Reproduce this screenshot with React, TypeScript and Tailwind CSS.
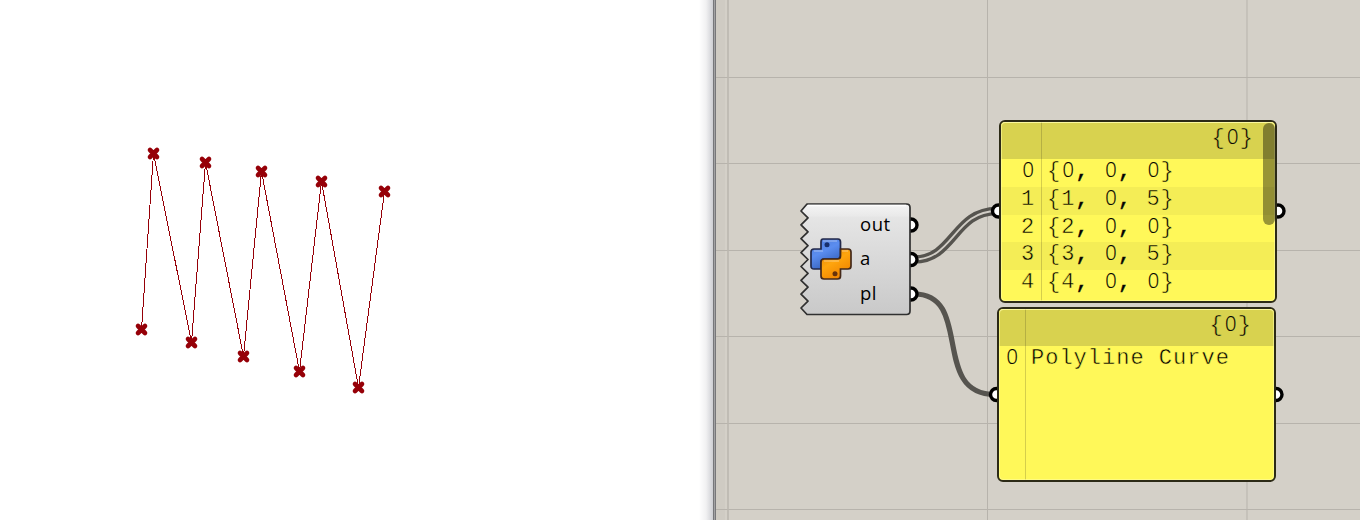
import { Fragment } from 'react';

const points = [
  [141, 329], [153, 153], [191, 342], [205, 162], [243, 356],
  [261, 171], [299, 371], [321, 181], [358, 387], [384, 191],
];

const ports = [
  [911, 225], [911, 259.5], [911, 294], [998.5, 211], [1278, 211], [996.5, 394.5], [1276, 394.5],
];

const rows = ['{0, 0, 0}', '{1, 0, 5}', '{2, 0, 0}', '{3, 0, 5}', '{4, 0, 0}'];

function Mono({ text }: { text: string }) {
  return (
    <span className="whitespace-pre">
      {text.split(/([0,])/).map((part, i) => {
        if (part === '0') {
          return (
            <span key={i} className="relative left-[1.4px] font-['Open_Sans'] text-[20px] font-light leading-[0] tracking-[2.76px] text-black [-webkit-text-stroke:0.2px_#1a1908]">0</span>
          );
        }
        if (part === ',') {
          return <span key={i} className="[-webkit-text-stroke:0.5px_#15140a]">,</span>;
        }
        return <Fragment key={i}>{part}</Fragment>;
      })}
    </span>
  );
}

function Viewport() {
  return (
    <section className="h-full w-[713px] shrink-0 bg-white">
      <svg width="713" height="520" className="block">
        <defs>
          <linearGradient id="edge">
            <stop offset="0" stopColor="#fff" />
            <stop offset="0.5" stopColor="#f1f1f2" />
            <stop offset="1" stopColor="#cdced3" />
          </linearGradient>
        </defs>
        <rect x="699" width="14" height="520" fill="url(#edge)" />
        <polyline
          points={points.map(([x, y]) => `${x + 0.5},${y + 0.5}`).join(' ')}
          fill="none"
          stroke="#960008"
          strokeWidth="1"
          shapeRendering="crispEdges"
        />
        {points.map(([x, y]) => (
          <path
            key={x}
            transform={`translate(${x + 0.5} ${y + 0.5})`}
            d="M-3.500 -3.500L3.500 3.500M3.500 -3.500L-3.500 3.500"
            stroke="#960008"
            strokeWidth="4.6"
            strokeLinecap="round"
          />
        ))}
      </svg>
    </section>
  );
}

function PythonIcon() {
  return (
    <svg width="42" height="42" viewBox="0 0 42 42" className="relative -top-[0.5px] block shrink-0">
      <defs>
        <linearGradient id="blue" x1="0" y1="0" x2="0.5" y2="1">
          <stop offset="0" stopColor="#4d7ad6" />
          <stop offset="0.5" stopColor="#5b8df0" />
          <stop offset="1" stopColor="#3561bd" />
        </linearGradient>
        <linearGradient id="orange" x1="0" y1="0" x2="0.6" y2="1">
          <stop offset="0" stopColor="#e07f05" />
          <stop offset="0.5" stopColor="#ffa50d" />
          <stop offset="1" stopColor="#ef8300" />
        </linearGradient>
      </defs>
      <path
        d="M13 1H28Q30.500 1 30.500 4V18Q30.500 21 27.500 21H14Q11 21 11 24V31H4Q1 31 1 28V14Q1 11 4 11H11V4Q11 1 13 1Z"
        fill="url(#blue)" stroke="#23294a" strokeWidth="1.7"
      />
      <path
        d="M30.500 11H38Q41 11 41 14V28Q41 31 38 31H30.500V38Q30.500 41 27.500 41H14Q11 41 11 38V24Q11 21 14 21H27.500Q30.500 21 30.500 18Z"
        fill="url(#orange)" stroke="#44291a" strokeWidth="1.7"
      />
      <path d="M13 3H27M4 13H13M32 13H38M14 23H29" stroke="#fff" strokeOpacity="0.3" strokeWidth="1.4" />
      <circle cx="17" cy="6.700" r="2.500" fill="#172f6d" />
      <circle cx="25" cy="35.800" r="2.500" fill="#67320b" />
    </svg>
  );
}

function Wiring() {
  return (
    <svg width="645" height="520" viewBox="715 0 645 520" className="absolute inset-0">
      <rect x="715" width="10" height="520" fill="#c9c5be" opacity="0.5" />
      <path
        d="M715 77.500H1360M715 163.500H1360M715 250.500H1360M715 336.500H1360M715 423.500H1360M715 509.500H1360M987.500 0V520M1247 0V520"
        stroke="#b7b3ac" strokeWidth="1"
      />
      <path d="M728 0V520" stroke="#bbb7b0" strokeWidth="1.6" />
      <path d="M715.500 0V520" stroke="#77777a" strokeWidth="1" />
      <path d="M914 259.500C954 259.500 954 211 997 211" fill="none" stroke="#56544f" strokeWidth="8.6" />
      <path d="M914 259.500C954 259.500 954 211 997 211" fill="none" stroke="#d1cdc6" strokeWidth="1.8" />
      <path d="M914 294C974 294 930 394.500 995 394.500" fill="none" stroke="#56544f" strokeWidth="5.2" />
      {ports.map(([x, y]) => (
        <circle key={`${x}-${y}`} cx={x} cy={y} r="6" fill="#fff" stroke="#000" strokeWidth="3.4" />
      ))}
    </svg>
  );
}

function ScriptNode() {
  return (
    <div className="absolute left-[84px] top-[202px] h-[114px] w-[113px]">
      <svg width="113" height="114" className="absolute inset-0">
        <defs>
          <linearGradient id="body" x1="0" y1="0" x2="0" y2="1">
            <stop offset="0" stopColor="#f5f5f5" />
            <stop offset="0.11" stopColor="#e9e9e9" />
            <stop offset="0.12" stopColor="#e5e5e5" />
            <stop offset="1" stopColor="#c9c9c9" />
          </linearGradient>
        </defs>
        <path
          d="M8 2H107.500Q111 2 111 5.500V109Q111 112.500 107.500 112.500H8L2 106L9 99.100L2 92.200L9 85.200L2 78.300L9 71.400L2 64.500L9 57.500L2 50.600L9 43.600L2 36.700L9 29.800L2 22.800L9 15.900L2 9Z"
          fill="url(#body)" stroke="#303030" strokeWidth="1.7" strokeLinejoin="round"
        />
        <path d="M9 3.500H107" stroke="#fff" strokeWidth="1.4" />
      </svg>
      <div className="relative flex h-full items-center gap-2 pl-[11px]">
        <PythonIcon />
        <div className="relative -top-[0.5px] flex flex-col font-['Open_Sans',sans-serif] text-[18.5px] leading-[34.5px] tracking-[0.5px] text-black">
          <span>out</span>
          <span>a</span>
          <span>pl</span>
        </div>
      </div>
    </div>
  );
}

const mono = "font-['Liberation_Mono',monospace] text-[22px] tracking-[1px] text-black [-webkit-text-stroke:0.5px_#fbf458]";

export default function App() {
  return (
    <main className="flex h-[520px] w-[1360px] overflow-hidden bg-[#d4d0c8]">
      <Viewport />
      <div className="h-full w-[2px] shrink-0 border-l border-[#77777a] bg-[#a2a2a4]" />
      <section className="relative h-full w-[645px] shrink-0">
        <Wiring />
        <ScriptNode />

        <div className={`${mono} absolute left-[284px] top-[120px] h-[183px] w-[278px] overflow-hidden rounded-[6px] border-2 border-[#2c2a16] bg-[#fff859]`}>
          <div className="h-[37px] rounded-t-[4px] border-t-[1.5px] border-[#f4f19b] bg-[#d8d24f] pr-[21px] text-right leading-[31px] [-webkit-text-stroke-color:#d8d24f]">
            <Mono text="{0}" />
          </div>
          {rows.map((row, i) => (
            <div key={row} className={`flex h-[27.8px] leading-[25px] ${i % 2 ? 'bg-[#f4ed56]' : ''}`}>
              <span className="w-[46px] shrink-0 pl-[20px]"><Mono text={String(i)} /></span>
              <Mono text={row} />
            </div>
          ))}
          <div className="absolute inset-y-0 left-[40px] w-px bg-[#2c2a16]/20" />
          <div className="absolute inset-0 rounded-[4px] border border-[#fffda0]/60" />
          <div className="absolute right-0 top-[1px] h-[102px] w-[12px] rounded-[6px] bg-black/40" />
        </div>

        <div className={`${mono} absolute left-[282px] top-[307px] h-[174.5px] w-[279px] overflow-hidden rounded-[6px] border-2 border-[#2c2a16] bg-[#fff859]`}>
          <div className="h-[37px] rounded-t-[4px] border-t-[1.5px] border-[#f4f19b] bg-[#d8d24f] pr-[22px] text-right leading-[31px] [-webkit-text-stroke-color:#d8d24f]">
            <Mono text="{0}" />
          </div>
          <div className="flex h-[28px] leading-[25px]">
            <span className="w-[32px] shrink-0 pl-[6px]"><Mono text="0" /></span>
            <Mono text="Polyline Curve" />
          </div>
          <div className="absolute inset-y-0 left-[26px] w-px bg-[#2c2a16]/20" />
          <div className="absolute inset-0 rounded-[4px] border border-[#fffda0]/60" />
        </div>
      </section>
    </main>
  );
}
